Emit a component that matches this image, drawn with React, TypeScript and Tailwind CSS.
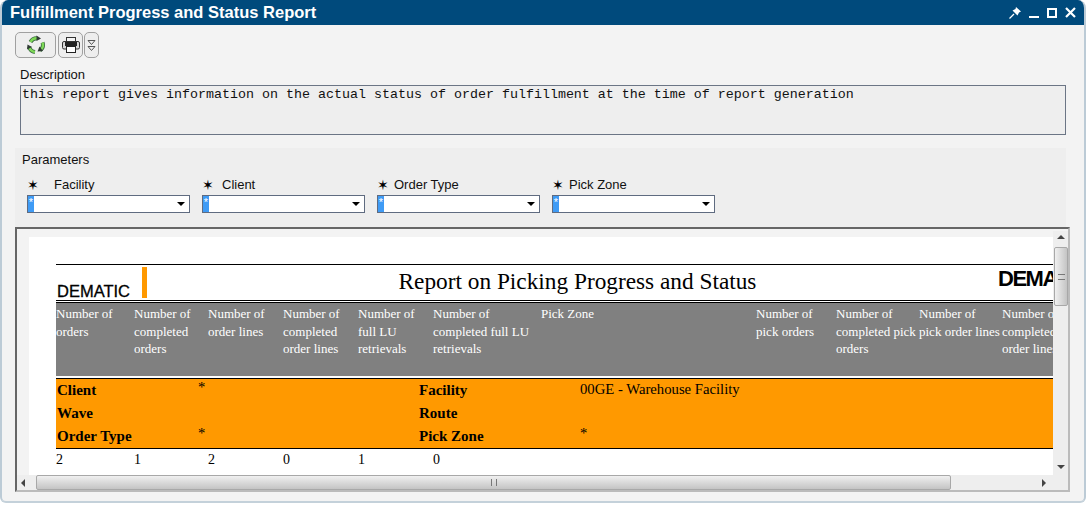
import React from "react";

const HEADERS = [
  { w: "w-[78px]", text: "Number of orders" },
  { w: "w-[74px]", text: "Number of completed orders" },
  { w: "w-[75px]", text: "Number of order lines" },
  { w: "w-[75px]", text: "Number of completed order lines" },
  { w: "w-[75px]", text: "Number of full LU retrievals" },
  { w: "w-[108px]", text: "Number of completed full LU retrievals" },
  { w: "w-[215px]", text: "Pick Zone" },
  { w: "w-[80px]", text: "Number of pick orders" },
  { w: "w-[83px]", text: "Number of completed pick orders" },
  { w: "w-[83px]", text: "Number of pick order lines" },
  { w: "w-[83px]", text: "Number of completed order lines" },
];

const VALUES = [
  { w: "w-[78px]", text: "2" },
  { w: "w-[74px]", text: "1" },
  { w: "w-[75px]", text: "2" },
  { w: "w-[75px]", text: "0" },
  { w: "w-[75px]", text: "1" },
  { w: "w-[108px]", text: "0" },
];

const PARAMS = [
  { name: "Facility", gap: "w-[18px]" },
  { name: "Client", gap: "w-[11px]" },
  { name: "Order Type", gap: "w-[8px]" },
  { name: "Pick Zone", gap: "w-[8px]" },
];

const ARCS = [
  "M4.5 7 A7 7 0 0 1 11 3.2",
  "M16.5 7.5 A7 7 0 0 1 14 15.5",
  "M9 17 A7 7 0 0 1 3.2 12",
];

function RecycleIcon() {
  return (
    <svg width="20" height="20" viewBox="0 0 20 20" fill="none">
      {ARCS.map((d) => (
        <path key={d} d={d} stroke="#3c6b42" strokeWidth="4" />
      ))}
      {ARCS.map((d) => (
        <path key={d} d={d} stroke="#7ed957" strokeWidth="2.4" />
      ))}
      <path d="M10.5 0.5 L15 3.5 L10.5 6 Z" fill="#2f3a33" />
      <path d="M17 16 L11.5 16.5 L13.5 11.5 Z" fill="#2f3a33" />
      <path d="M1 14.5 L1.5 9.5 L6 12 Z" fill="#2f3a33" />
    </svg>
  );
}

function PrinterIcon() {
  return (
    <svg width="18" height="16" viewBox="0 0 18 16">
      <rect x="4.5" y="0.5" width="9" height="5" fill="#f4f4f4" stroke="#333" />
      <rect x="0.5" y="4.5" width="17" height="7.5" rx="1.5" fill="#d8d8d8" stroke="#333" />
      <rect x="3" y="5" width="12" height="4" fill="#222" />
      <rect x="4.5" y="9.5" width="9" height="6" fill="#fff" stroke="#222" />
    </svg>
  );
}

function DoubleChevron() {
  return (
    <svg width="9" height="13" viewBox="0 0 9 13" fill="none" stroke="#555" strokeWidth="1">
      <path d="M1 1.5 H8 L4.5 5.5 Z" />
      <path d="M1 7.5 H8 L4.5 11.5 Z" />
    </svg>
  );
}

function Select() {
  return (
    <div className="flex h-[18px] w-[163px] items-stretch border border-[#5f6b80] bg-white">
      <div className="flex w-[6px] justify-center bg-[#3f9bf5] text-[11px] leading-[13px] text-white">*</div>
      <div className="flex-1" />
      <div className="mr-[4px] self-center border-x-[4px] border-t-[4px] border-x-transparent border-t-black" />
    </div>
  );
}

function OrangeCell({ label, value }: { label: string; value?: string }) {
  return (
    <div className="flex h-[23px] text-[15px] leading-[23px] font-bold">
      <div className="w-[141px]">{label}</div>
      <div className="-mt-[3px] text-[14.7px] font-normal">{value}</div>
    </div>
  );
}

export default function App() {
  return (
    <div className="h-[505px] w-[1087px] overflow-hidden bg-white font-['Liberation_Sans',sans-serif] text-[13px] text-[#111]">
      <div className="flex h-[503px] w-[1086px] flex-col overflow-hidden rounded-t-lg rounded-b-md border-x-2 border-b-2 border-x-[#bccbd6] border-b-[#c4d1da] bg-[#f3f3f3]">
        {/* Title bar */}
        <div className="-mx-[2px] flex h-[25px] shrink-0 items-center justify-between bg-[#004a7c] pr-[10px] pl-[10px] text-white">
          <span className="text-[16.5px] leading-[25px] font-bold">Fulfillment Progress and Status Report</span>
          <div className="flex items-center gap-[8px]">
            <svg width="12" height="12" viewBox="0 0 12 12">
              <path d="M7 0 L12 4.5 L10 5.5 L8.5 8.5 L3.5 3.5 L6.5 2 Z" fill="#fff" />
              <path d="M5 7 L0.5 11.5" stroke="#fff" strokeWidth="1.2" />
            </svg>
            <div className="mt-[8px] h-[2px] w-[10px] bg-white" />
            <div className="h-[10px] w-[10px] border-2 border-white" />
            <svg width="11" height="11" viewBox="0 0 11 11">
              <path d="M1 1 L10 10 M10 1 L1 10" stroke="#fff" strokeWidth="2.2" />
            </svg>
          </div>
        </div>

        <div className="flex flex-1 flex-col pr-[14px] pl-[13px]">
          {/* Toolbar */}
          <div className="mt-[7px] flex h-[26px] items-stretch">
            <div className="flex w-[41px] items-center justify-center rounded-[5px] border border-[#a0a0a0] bg-[#eeeeee]">
              <RecycleIcon />
            </div>
            <div className="ml-[2px] flex w-[25px] items-center justify-center rounded-[5px] border border-[#a0a0a0] bg-[#eeeeee]">
              <PrinterIcon />
            </div>
            <div className="ml-px flex w-[15px] items-center justify-center rounded-[5px] border border-[#a0a0a0] bg-[#eeeeee]">
              <DoubleChevron />
            </div>
          </div>

          {/* Description */}
          <div className="mt-[8px] ml-[5px] h-[19px] leading-[18px]">Description</div>
          <div className="mr-[4px] ml-[5px] h-[50px] border border-[#6b7585] bg-[#eeeeee] pl-px font-['Liberation_Mono',monospace] text-[13.33px] leading-[18px]">
            this report gives information on the actual status of order fulfillment at the time of report generation
          </div>

          {/* Parameters */}
          <div className="mt-[13px] mr-[4px] h-[79px] bg-[#eeeeee] pl-[7px]">
            <div className="h-[23px] pt-[3px] leading-[17px]">Parameters</div>
            <div className="flex">
              {PARAMS.map((p) => (
                <div key={p.name} className="mr-[12px] w-[163px] first:ml-[5px]">
                  <div className="mt-[5px] flex h-[17px] items-center">
                    <span className="w-[9px] text-center text-[14px] leading-none text-black">✶</span>
                    <span className={p.gap} />
                    <span>{p.name}</span>
                  </div>
                  <div className="mt-[2px]">
                    <Select />
                  </div>
                </div>
              ))}
            </div>
          </div>

          {/* Report viewer */}
          <div className="mb-[10px] flex flex-1 flex-col overflow-hidden border-2 border-[#666666] border-r-[#bbbbbb] border-b-[#bbbbbb] bg-[#f3f3f3]">
            <div className="flex min-h-0 flex-1">
              <div className="mt-[8px] ml-[12px] h-[238px] w-[1024px] shrink-0 overflow-hidden bg-white pl-[27px] font-['Liberation_Serif',serif] text-[13px] text-black">
                <div className="w-[1100px]">
                  <div className="mt-[27px] flex h-[37px] items-stretch border-y border-black">
                    <div className="flex w-[86px] items-end pl-px font-['Liberation_Sans',sans-serif] text-[16.5px] leading-[17px] [-webkit-text-stroke:0.3px_black]">
                      DEMATIC
                    </div>
                    <div className="my-[2px] w-[5px] bg-[#ff9900]" />
                    <div className="w-[851px] pl-[10px] text-center text-[23.3px] leading-[32px]">Report on Picking Progress and Status</div>
                    <div className="font-['Liberation_Sans',sans-serif] text-[22px] leading-[27px] font-bold tracking-[-1.5px]">DEMATIC</div>
                  </div>
                  <div className="mt-px flex h-[74px] border-t border-black bg-[#808080] pt-[2px] text-white">
                    {HEADERS.map((h) => (
                      <div key={h.text} className={`${h.w} shrink-0 pr-[2px] leading-[17.5px]`}>
                        {h.text}
                      </div>
                    ))}
                  </div>
                  <div className="mt-[2px] h-[71px] border-y border-black bg-[#ff9900] text-[14.7px]">
                    <div className="flex">
                      <div className="w-[363px] pl-px">
                        <OrangeCell label="Client" value="*" />
                        <OrangeCell label="Wave" />
                        <OrangeCell label="Order Type" value="*" />
                      </div>
                      <div className="w-[161px] text-[15px] font-bold">
                        <div className="h-[23px] leading-[23px]">Facility</div>
                        <div className="h-[23px] leading-[23px]">Route</div>
                        <div className="h-[23px] leading-[23px]">Pick Zone</div>
                      </div>
                      <div>
                        <div className="h-[46px] leading-[20px]">00GE - Warehouse Facility</div>
                        <div className="-mt-[3px] leading-[23px]">*</div>
                      </div>
                    </div>
                  </div>
                  <div className="mt-[2px] flex text-[14px] leading-[18px]">
                    {VALUES.map((v, i) => (
                      <div key={i} className={`${v.w} shrink-0`}>
                        {v.text}
                      </div>
                    ))}
                  </div>
                </div>
              </div>
              {/* Vertical scrollbar */}
              <div className="mt-[2px] flex w-[16px] shrink-0 flex-col items-center bg-[#eeeeee]">
                <div className="mt-[4px] mb-[8px] border-x-[4px] border-b-[4px] border-x-transparent border-b-[#444]" />
                <div className="flex h-[59px] w-[14px] items-center justify-center rounded-[2px] border border-[#a8a8a8] bg-gradient-to-r from-[#f0f0f0] to-[#c4c4c4]">
                  <div className="h-[6px] w-[7px] border-y border-[#777]" />
                </div>
                <div className="flex-1" />
                <div className="mb-[6px] border-x-[4px] border-t-[4px] border-x-transparent border-t-[#444]" />
              </div>
            </div>
            {/* Horizontal scrollbar */}
            <div className="flex h-[15px] shrink-0 items-center bg-[#eeeeee] pr-[22px]">
              <div className="ml-[4px] w-[15px]">
                <div className="h-0 w-0 border-y-[4px] border-r-[4px] border-y-transparent border-r-[#444]" />
              </div>
              <div className="flex h-[15px] w-[915px] items-center justify-center rounded-[2px] border border-[#a8a8a8] bg-gradient-to-b from-[#f0f0f0] to-[#c4c4c4]">
                <div className="h-[7px] w-[6px] border-x border-[#777]" />
              </div>
              <div className="flex-1" />
              <div className="h-0 w-0 border-y-[4px] border-l-[4px] border-y-transparent border-l-[#444]" />
            </div>
          </div>
        </div>
      </div>
    </div>
  );
}
